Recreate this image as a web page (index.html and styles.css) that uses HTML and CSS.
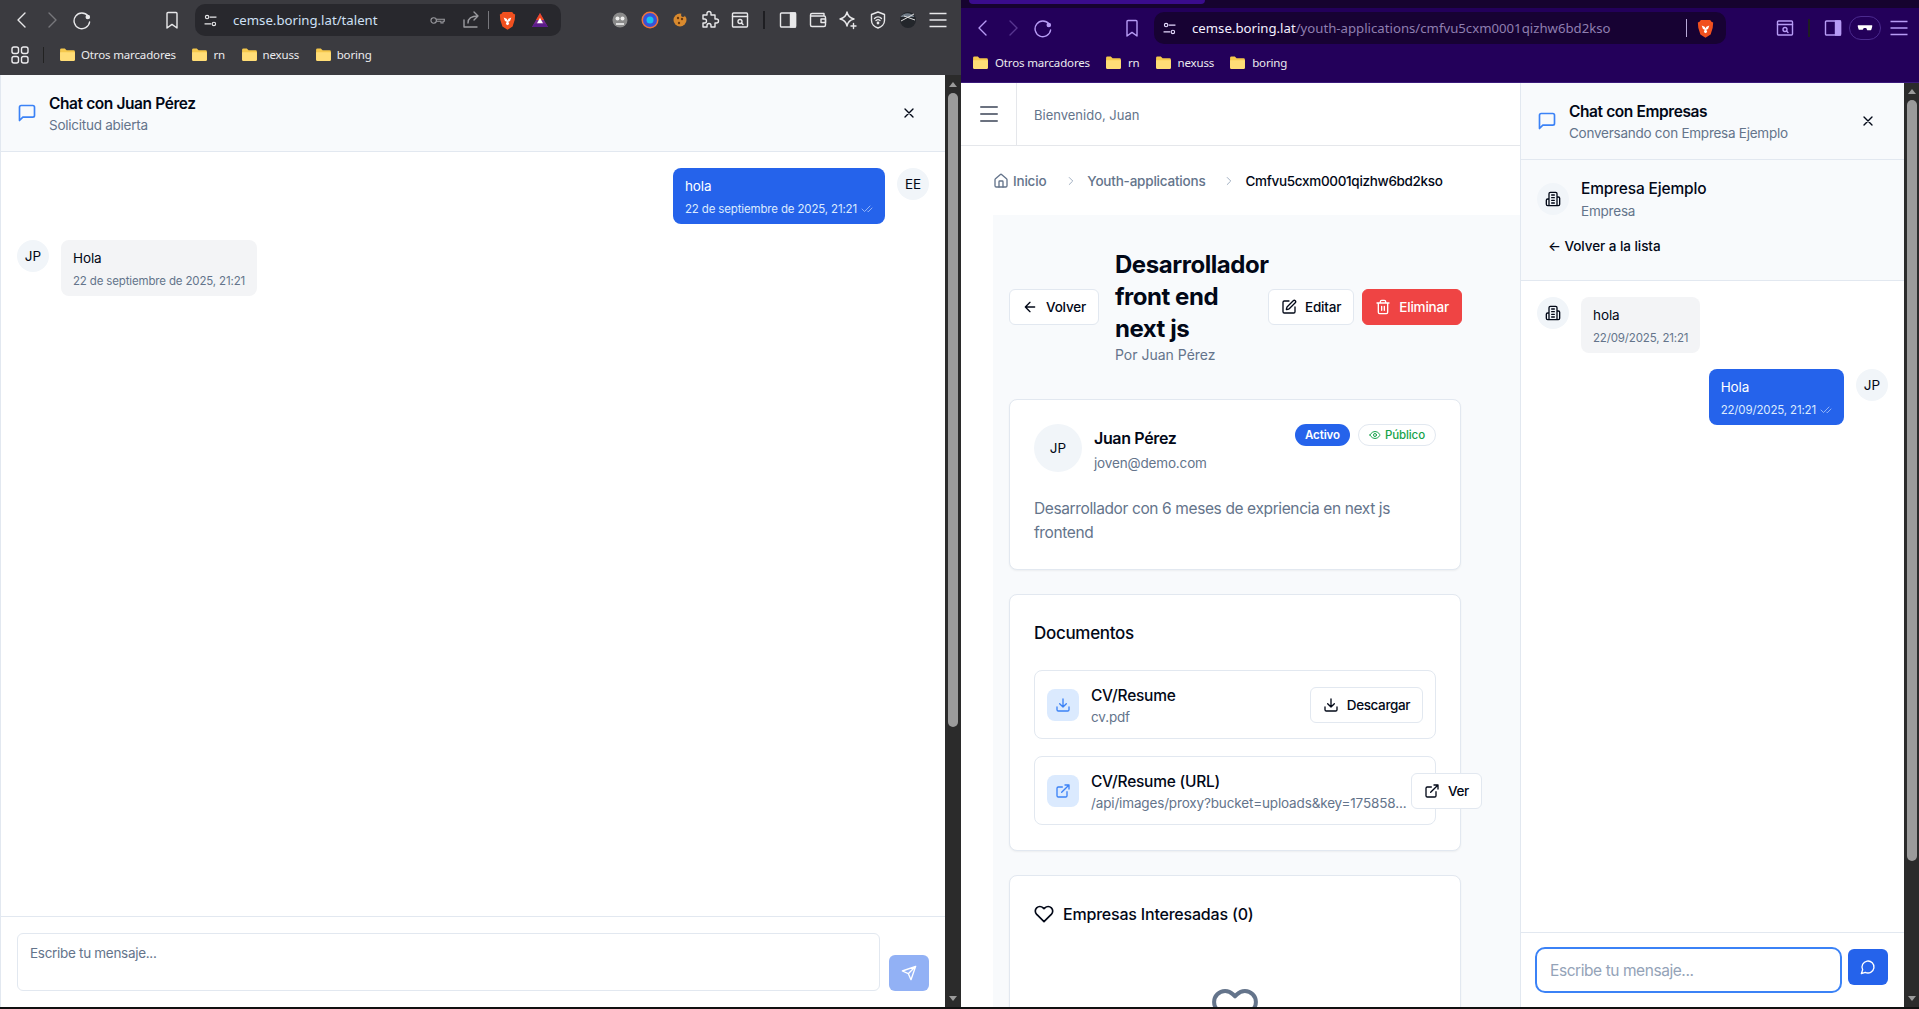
FILE: index.html
```html
<!DOCTYPE html>
<html lang="es">
<head>
<meta charset="utf-8">
<title>Chat</title>
<link rel="stylesheet" href="styles.css">
</head>
<body>
<svg class="sprite" xmlns="http://www.w3.org/2000/svg">
  <symbol id="i-msg" viewBox="0 0 24 24"><path d="M21 15a2 2 0 0 1-2 2H7l-4 4V5a2 2 0 0 1 2-2h14a2 2 0 0 1 2 2z"/></symbol>
  <symbol id="i-x" viewBox="0 0 24 24"><path d="M18 6 6 18M6 6l12 12"/></symbol>
  <symbol id="i-home" viewBox="0 0 24 24"><path d="M15 21v-8a1 1 0 0 0-1-1h-4a1 1 0 0 0-1 1v8"/><path d="M3 10a2 2 0 0 1 .709-1.528l7-5.999a2 2 0 0 1 2.582 0l7 5.999A2 2 0 0 1 21 10v9a2 2 0 0 1-2 2H5a2 2 0 0 1-2-2z"/></symbol>
  <symbol id="i-chev" viewBox="0 0 24 24"><path d="m9 18 6-6-6-6"/></symbol>
  <symbol id="i-back" viewBox="0 0 24 24"><path d="m12 19-7-7 7-7M19 12H5"/></symbol>
  <symbol id="i-pen" viewBox="0 0 24 24"><path d="M12 3H5a2 2 0 0 0-2 2v14a2 2 0 0 0 2 2h14a2 2 0 0 0 2-2v-7"/><path d="M18.375 2.625a1 1 0 0 1 3 3l-9.013 9.014a2 2 0 0 1-.853.505l-2.873.84a.5.5 0 0 1-.62-.62l.84-2.873a2 2 0 0 1 .506-.852z"/></symbol>
  <symbol id="i-trash" viewBox="0 0 24 24"><path d="M3 6h18M19 6v14c0 1-1 2-2 2H7c-1 0-2-1-2-2V6M8 6V4c0-1 1-2 2-2h4c1 0 2 1 2 2v2M10 11v6M14 11v6"/></symbol>
  <symbol id="i-eye" viewBox="0 0 24 24"><path d="M2 12s3-7 10-7 10 7 10 7-3 7-10 7-10-7-10-7Z"/><circle cx="12" cy="12" r="3"/></symbol>
  <symbol id="i-dl" viewBox="0 0 24 24"><path d="M21 15v4a2 2 0 0 1-2 2H5a2 2 0 0 1-2-2v-4M7 10l5 5 5-5M12 15V3"/></symbol>
  <symbol id="i-ext" viewBox="0 0 24 24"><path d="M15 3h6v6M10 14 21 3M18 13v6a2 2 0 0 1-2 2H5a2 2 0 0 1-2-2V8a2 2 0 0 1 2-2h6"/></symbol>
  <symbol id="i-heart" viewBox="0 0 24 24"><path d="M20.84 4.61a5.5 5.5 0 0 0-7.78 0L12 5.67l-1.06-1.06a5.5 5.5 0 0 0-7.78 7.78l1.06 1.06L12 21.23l7.78-7.78 1.06-1.06a5.5 5.5 0 0 0 0-7.78z"/></symbol>
  <symbol id="i-bld" viewBox="0 0 24 24"><path d="M6 22V4a2 2 0 0 1 2-2h8a2 2 0 0 1 2 2v18ZM6 12H4a2 2 0 0 0-2 2v6a2 2 0 0 0 2 2h2M18 9h2a2 2 0 0 1 2 2v9a2 2 0 0 1-2 2h-2M10 6h4M10 10h4M10 14h4M10 18h4"/></symbol>
  <symbol id="i-check" viewBox="0 0 24 24"><path d="M18 6 7 17l-5-5M22 10l-7.5 7.5L13 16"/></symbol>
  <symbol id="i-send" viewBox="0 0 24 24"><path d="m22 2-7 20-4-9-9-4ZM22 2 11 13"/></symbol>
  <symbol id="i-circ" viewBox="0 0 24 24"><path d="M7.9 20A9 9 0 1 0 4 16.1L2 22Z"/></symbol>
  <symbol id="i-menu" viewBox="0 0 24 24"><path d="M4 5h16M4 12h16M4 19h16"/></symbol>
  <symbol id="b-menu" viewBox="0 0 20 20"><path d="M1.5 3.5h17M1.500 10h17M1.500 16.500h17"/></symbol>
  <symbol id="b-back" viewBox="0 0 20 20"><path d="M13 3 6 10l7 7"/></symbol>
  <symbol id="b-fwd" viewBox="0 0 20 20"><path d="m7 3 7 7-7 7"/></symbol>
  <symbol id="b-reload" viewBox="0 0 20 20"><path d="M16 6A7.800 7.800 0 1 0 17.600 12"/><circle cx="15.800" cy="7" r="1.600" fill="currentColor"/></symbol>
  <symbol id="b-mark" viewBox="0 0 20 20"><path d="M5 3.500a1 1 0 0 1 1-1h8a1 1 0 0 1 1 1V18l-5-3.600L5 18Z"/></symbol>
  <symbol id="b-tune" viewBox="0 0 20 20"><circle cx="6" cy="6" r="2"/><circle cx="14" cy="14" r="2"/><path d="M9 6h8M3 14h8"/></symbol>
  <symbol id="b-key" viewBox="0 0 20 20"><circle cx="5.500" cy="10" r="3.200"/><path d="M8.700 8.500H18v2.400h-1.500V13h-2.400v-2.100H8.700"/></symbol>
  <symbol id="b-share" viewBox="0 0 20 20"><path d="M3 10v7h13M7 13c0-5 3-7 10-7M13 2l4 4-4 4"/></symbol>
  <symbol id="b-apps" viewBox="0 0 20 20"><rect x="2" y="2" width="6.500" height="6.500" rx="2"/><rect x="11.500" y="2" width="6.500" height="6.500" rx="2"/><rect x="2" y="11.500" width="6.500" height="6.500" rx="2"/><rect x="11.500" y="11.500" width="6.500" height="6.500" rx="2"/></symbol>
  <symbol id="b-puzzle" viewBox="0 0 20 20"><path d="M7 3.500a2 2 0 0 1 4 0V5h4v4h1.500a2 2 0 0 1 0 4H15v4h-4v-1.500a2 2 0 0 0-4 0V17H3v-4h1.500a2 2 0 0 0 0-4H3V5h4Z"/></symbol>
  <symbol id="b-search" viewBox="0 0 20 20"><rect x="2.500" y="3" width="15" height="14" rx="1"/><path d="M2.500 6.500h15"/><circle cx="10" cy="11.500" r="2"/><path d="m11.500 13 1.500 1.500"/></symbol>
  <symbol id="b-side" viewBox="0 0 20 20"><rect x="2.500" y="3" width="15" height="14" rx="1"/><path d="M12.500 3h5v14h-5Z" fill="currentColor"/></symbol>
  <symbol id="b-wallet" viewBox="0 0 20 20"><path d="M16 6V3.500H4A1.500 1.500 0 0 0 2.500 5v10A1.500 1.500 0 0 0 4 16.500h12a1.500 1.500 0 0 0 1.500-1.500V7.500A1.500 1.500 0 0 0 16 6H3"/><rect x="13" y="9" width="4.500" height="3.500"/></symbol>
  <symbol id="b-spark" viewBox="0 0 20 20"><path d="M9 2c.8 4 2.500 6 7 7-4.500 1-6.200 3-7 7-.8-4-2.500-6-7-7 4.500-1 6.200-3 7-7Z"/><path d="M15.500 13.500v5M13 16h5"/></symbol>
  <symbol id="b-shield" viewBox="0 0 20 20"><path d="M10 2 3.500 4.500v6C3.500 14 6.500 17 10 18c3.500-1 6.500-4 6.500-7.500v-6Z"/><path d="M6.500 8.500a5 5 0 0 1 7 0M8 10.500a3 3 0 0 1 4 0"/><circle cx="10" cy="13" r=".7"/></symbol>
  <symbol id="b-folder" viewBox="0 0 16 14"><path d="M0 2A1.500 1.500 0 0 1 1.500.5h3.600L7 2.500h7.500A1.500 1.500 0 0 1 16 4v8.500a1.500 1.500 0 0 1-1.500 1.500h-13A1.500 1.500 0 0 1 0 12.500Z" fill="#f5c84c"/><path d="M0 4.500h16v8a1.500 1.500 0 0 1-1.500 1.500h-13A1.500 1.500 0 0 1 0 12.500Z" fill="#ffdd77"/></symbol>
  <symbol id="b-lion" viewBox="0 0 20 22"><path d="M4.500 1h11l1.500 2 2 1-.5 6-2.500 8-6 4-6-4-2.500-8-.5-6 2-1Z" fill="#f1501f"/><path d="M5.500 7.500 9 9l1 2 1-2 3.500-1.500-1.500 4-2 1 1 2.500-2 1.500-2-1.500 1-2.500-2-1Z" fill="#fff"/></symbol>
  <symbol id="b-tri" viewBox="0 0 20 18"><path d="M10 1 1 17h18Z" fill="#7a2a94"/><path d="M10 1 5.500 9h9Z" fill="#f04a23"/><path d="M10 6.500 6.500 13h7Z" fill="#fff"/><path d="M1 17h18l-3-4H4Z" fill="#5a1d8a"/></symbol>
  <symbol id="b-glass" viewBox="0 0 20 10"><path d="M1 1.500h18v2l-1 3.500a1 1 0 0 1-1 .8h-3.500a1 1 0 0 1-1-.7L11.500 5h-3l-1 1.600a1 1 0 0 1-1 .7H3a1 1 0 0 1-1-.8L1 3.500Z" fill="currentColor"/></symbol>
</svg>

<div class="desktop">

  <section class="window win-dark">
    <div class="toolbar">
      <div class="nav-group">
        <svg class="bi"><use href="#b-back"/></svg>
        <svg class="bi dim"><use href="#b-fwd"/></svg>
        <svg class="bi"><use href="#b-reload"/></svg>
      </div>
      <svg class="bi mark"><use href="#b-mark"/></svg>
      <div class="urlbar">
        <svg class="bi-s"><use href="#b-tune"/></svg>
        <span class="url"><span class="host">cemse.boring.lat/talent</span></span>
        <svg class="bi-s key"><use href="#b-key"/></svg>
        <svg class="bi share"><use href="#b-share"/></svg>
        <i class="url-sep"></i>
        <svg class="logo lion"><use href="#b-lion"/></svg>
        <svg class="logo tri"><use href="#b-tri"/></svg>
      </div>
      <div class="tools">
        <svg class="ext" viewBox="0 0 20 20"><circle cx="10" cy="10" r="7.500" fill="#8a8a8a"/><circle cx="7.500" cy="8.500" r="2" fill="#eee"/><circle cx="12.500" cy="8.500" r="2" fill="#eee"/><path d="M6 13h8v2H6Z" fill="#ddd"/></svg>
        <svg class="ext" viewBox="0 0 20 20"><circle cx="10" cy="10" r="8.500" fill="#f0743a"/><circle cx="10" cy="10" r="7" fill="#3a52d8"/><circle cx="10" cy="10" r="3.500" fill="#17c3f0"/></svg>
        <svg class="ext" viewBox="0 0 20 20"><circle cx="10" cy="10" r="6.500" fill="#d98a2e"/><circle cx="8" cy="8" r="1.200" fill="#6b3a10"/><circle cx="12" cy="9" r="1.200" fill="#6b3a10"/><circle cx="9" cy="13" r="1.200" fill="#6b3a10"/><circle cx="13" cy="5" r="2" fill="#3b3b40"/></svg>
        <svg class="bi"><use href="#b-puzzle"/></svg>
        <svg class="bi"><use href="#b-search"/></svg>
        <i class="tool-sep"></i>
        <svg class="bi"><use href="#b-side"/></svg>
        <svg class="bi"><use href="#b-wallet"/></svg>
        <svg class="bi"><use href="#b-spark"/></svg>
        <svg class="bi"><use href="#b-shield"/></svg>
        <svg class="ext" viewBox="0 0 20 20"><circle cx="10" cy="10" r="8" fill="#23262b"/><path d="M2.500 7c3-5 11-5 14 0Z" fill="#6f7a86"/><path d="M3 11 16 4M6 6l11 4" stroke="#ddd" fill="none"/></svg>
        <svg class="bi menu-b"><use href="#b-menu"/></svg>
      </div>
    </div>
    <div class="bookmarks">
      <svg class="bi apps"><use href="#b-apps"/></svg>
      <i class="bm-sep"></i>
      <span class="bm"><svg class="folder"><use href="#b-folder"/></svg>Otros marcadores</span>
      <span class="bm"><svg class="folder"><use href="#b-folder"/></svg>rn</span>
      <span class="bm"><svg class="folder"><use href="#b-folder"/></svg>nexuss</span>
      <span class="bm"><svg class="folder"><use href="#b-folder"/></svg>boring</span>
    </div>
    <div class="viewport">
      <div class="chat full">
        <header class="chat-head">
          <svg class="ic head-ic"><use href="#i-msg"/></svg>
          <div class="head-text">
            <h2>Chat con Juan Pérez</h2>
            <p>Solicitud abierta</p>
          </div>
          <svg class="ic close"><use href="#i-x"/></svg>
        </header>
        <div class="msgs">
          <div class="msg mine">
            <div class="bubble blue">
              <p>hola</p>
              <div class="meta">22 de septiembre de 2025, 21:21 <svg class="ic tick"><use href="#i-check"/></svg></div>
            </div>
            <span class="avatar">EE</span>
          </div>
          <div class="msg">
            <span class="avatar">JP</span>
            <div class="bubble gray">
              <p>Hola</p>
              <div class="meta">22 de septiembre de 2025, 21:21</div>
            </div>
          </div>
        </div>
        <div class="composer">
          <div class="fake-area">Escribe tu mensaje...</div>
          <button class="send-btn off"><svg class="ic"><use href="#i-send"/></svg></button>
        </div>
      </div>
      <div class="scrollbar left-bar"><i class="arrow up"></i><i class="thumb"></i><i class="arrow down"></i></div>
    </div>
  </section>

  <section class="window win-purple">
    <div class="tabstrip"><i class="tab"></i></div>
    <div class="toolbar">
      <div class="nav-group">
        <svg class="bi"><use href="#b-back"/></svg>
        <svg class="bi dim"><use href="#b-fwd"/></svg>
        <svg class="bi"><use href="#b-reload"/></svg>
      </div>
      <svg class="bi mark"><use href="#b-mark"/></svg>
      <div class="urlbar">
        <svg class="bi-s tune-w"><use href="#b-tune"/></svg>
        <span class="url"><span class="host">cemse.boring.lat</span>/youth-applications/cmfvu5cxm0001qizhw6bd2kso</span>
        <i class="url-sep"></i>
        <svg class="logo lion"><use href="#b-lion"/></svg>
      </div>
      <div class="tools">
        <svg class="bi"><use href="#b-search"/></svg>
        <i class="tool-sep"></i>
        <svg class="bi"><use href="#b-side"/></svg>
        <span class="glass-pill"><svg class="glass"><use href="#b-glass"/></svg></span>
        <svg class="bi menu-b"><use href="#b-menu"/></svg>
      </div>
    </div>
    <div class="bookmarks">
      <span class="bm"><svg class="folder"><use href="#b-folder"/></svg>Otros marcadores</span>
      <span class="bm"><svg class="folder"><use href="#b-folder"/></svg>rn</span>
      <span class="bm"><svg class="folder"><use href="#b-folder"/></svg>nexuss</span>
      <span class="bm"><svg class="folder"><use href="#b-folder"/></svg>boring</span>
    </div>
    <div class="viewport">
      <main class="app">
        <div class="topbar">
          <div class="menu-cell"><svg class="ic"><use href="#i-menu"/></svg></div>
          <span class="welcome">Bienvenido, Juan</span>
        </div>
        <nav class="crumbs">
          <span class="crumb"><svg class="ic"><use href="#i-home"/></svg>Inicio</span>
          <svg class="ic sep"><use href="#i-chev"/></svg>
          <span class="crumb">Youth-applications</span>
          <svg class="ic sep second"><use href="#i-chev"/></svg>
          <span class="crumb now">Cmfvu5cxm0001qizhw6bd2kso</span>
        </nav>
        <div class="content">
          <div class="title-row">
            <button class="btn"><svg class="ic"><use href="#i-back"/></svg>Volver</button>
            <div class="title">
              <h1>Desarrollador front end next js</h1>
              <p>Por Juan Pérez</p>
            </div>
            <div class="actions">
              <button class="btn"><svg class="ic"><use href="#i-pen"/></svg>Editar</button>
              <button class="btn danger"><svg class="ic"><use href="#i-trash"/></svg>Eliminar</button>
            </div>
          </div>

          <article class="card">
            <div class="person">
              <span class="avatar big">JP</span>
              <div class="who">
                <h3>Juan Pérez</h3>
                <p>joven@demo.com</p>
              </div>
              <div class="badges">
                <span class="badge active">Activo</span>
                <span class="badge public"><svg class="ic"><use href="#i-eye"/></svg>Público</span>
              </div>
            </div>
            <p class="desc">Desarrollador con 6 meses de expriencia en next js frontend</p>
          </article>

          <article class="card card-docs">
            <h3 class="card-title">Documentos</h3>
            <div class="docs">
              <div class="doc">
                <span class="doc-ic"><svg class="ic"><use href="#i-dl"/></svg></span>
                <div class="doc-info">
                  <h4>CV/Resume</h4>
                  <p>cv.pdf</p>
                </div>
                <button class="btn doc-btn"><svg class="ic"><use href="#i-dl"/></svg>Descargar</button>
              </div>
              <div class="doc">
                <span class="doc-ic"><svg class="ic"><use href="#i-ext"/></svg></span>
                <div class="doc-info wide">
                  <h4>CV/Resume (URL)</h4>
                  <p>/api/images/proxy?bucket=uploads&amp;key=175858...</p>
                </div>
                <button class="btn doc-btn"><svg class="ic"><use href="#i-ext"/></svg>Ver</button>
              </div>
            </div>
          </article>

          <article class="card">
            <h3 class="card-title with-ic"><svg class="ic"><use href="#i-heart"/></svg>Empresas Interesadas (0)</h3>
            <div class="empty"><svg class="ic"><use href="#i-heart"/></svg></div>
          </article>
        </div>
      </main>

      <aside class="chat side">
        <header class="chat-head">
          <svg class="ic head-ic"><use href="#i-msg"/></svg>
          <div class="head-text">
            <h2>Chat con Empresas</h2>
            <p>Conversando con Empresa Ejemplo</p>
          </div>
          <svg class="ic close"><use href="#i-x"/></svg>
        </header>
        <div class="company">
          <div class="company-row">
            <span class="avatar"><svg class="ic"><use href="#i-bld"/></svg></span>
            <div class="company-text">
              <h3>Empresa Ejemplo</h3>
              <p>Empresa</p>
            </div>
          </div>
          <button class="link-back">← Volver a la lista</button>
        </div>
        <div class="msgs">
          <div class="msg">
            <span class="avatar"><svg class="ic"><use href="#i-bld"/></svg></span>
            <div class="bubble gray">
              <p>hola</p>
              <div class="meta">22/09/2025, 21:21</div>
            </div>
          </div>
          <div class="msg mine">
            <div class="bubble blue">
              <p>Hola</p>
              <div class="meta">22/09/2025, 21:21 <svg class="ic tick"><use href="#i-check"/></svg></div>
            </div>
            <span class="avatar">JP</span>
          </div>
        </div>
        <div class="composer">
          <div class="focus-input">Escribe tu mensaje...</div>
          <button class="send-btn"><svg class="ic"><use href="#i-circ"/></svg></button>
        </div>
      </aside>
      <div class="scrollbar right-bar"><i class="arrow up"></i><i class="thumb"></i><i class="arrow down"></i></div>
    </div>
  </section>
</div>
</body>
</html>
```

FILE: styles.css
```css
* { box-sizing: border-box; }
html, body { margin: 0; height: 100%; overflow: hidden; }
body { background: #111; font-family: Inter, "Noto Sans", sans-serif; color: #020817; }
h1, h2, h3, h4, p { margin: 0; }
button { font: inherit; color: inherit; cursor: pointer; }
.sprite { display: none; }

.desktop { display: grid; grid-template-columns: 961px 958px; height: 1007px; }
.window { display: flex; flex-direction: column; min-width: 0; height: 1007px; overflow: hidden; }

/* browser chrome */
.toolbar { display: flex; align-items: center; flex: none; color: #e8e8ea; }
.bi { width: 20px; height: 20px; fill: none; stroke: currentColor; stroke-width: 1.4; stroke-linecap: round; stroke-linejoin: round; flex: none; }
.bi-s { width: 17px; height: 17px; fill: none; stroke: currentColor; stroke-width: 1.3; flex: none; }
.menu-b { stroke-width: 1.7; stroke-linecap: butt; }
.dim { opacity: .35; }
.nav-group { display: flex; gap: 10px; padding-left: 12px; }
.mark { margin-left: 70px; }
.urlbar { display: flex; align-items: center; height: 32px; border-radius: 10px; flex: none; }
.url { font-family: "Noto Sans", sans-serif; font-size: 13.2px; white-space: nowrap; }
.logo { flex: none; }
.lion { width: 17px; height: 19px; }
.tri { width: 18px; height: 16px; margin-left: 15px; }
.url-sep { width: 1px; height: 18px; flex: none; }
.tools { display: flex; align-items: center; gap: 10px; }
.ext { width: 20px; height: 20px; flex: none; }
.tool-sep { width: 2px; height: 18px; background: #1e1e22; margin: 0 3px; flex: none; }

.bookmarks { display: flex; align-items: center; flex: none; font-family: "Noto Sans", sans-serif; font-size: 11.5px; letter-spacing: -.15px; color: #ecebee; gap: 16.5px; }
.bm { display: inline-flex; align-items: center; gap: 6px; white-space: nowrap; }
.folder { width: 15px; height: 13px; flex: none; }
.bm-sep { width: 1px; height: 16px; background: #222; flex: none; }

.win-dark .toolbar { height: 40px; background: #3b3b40; }
.win-dark .urlbar { width: 366px; margin-left: 13px; padding-left: 7px; background: #28282d; }
.win-dark .url { margin-left: 14px; width: 196px; color: #cfe0f5; }
.win-dark .key { color: #9a9a9f; }
.win-dark .share { color: #9a9a9f; margin-left: 15px; }
.win-dark .url-sep { background: #77777c; margin: 0 10px 0 7px; }
.win-dark .tools { margin-left: 49px; }
.win-dark .bookmarks { height: 35px; background: #3b3b40; padding-left: 10px; padding-bottom: 6px; }
.win-dark .apps { margin-right: -4px; }

.tabstrip { height: 8px; background: #16032f; flex: none; padding-left: 8px; }
.tab { display: block; width: 236px; height: 4px; background: #3a0c8c; border-radius: 0 0 4px 4px; }
.win-purple .toolbar { height: 40px; background: #23005a; color: #b79bf5; }
.win-purple .mark { margin-left: 69px; }
.win-purple .urlbar { width: 572px; margin-left: 12px; padding-left: 7px; background: #170233; }
.win-purple .tune-w { color: #e6dcff; }
.win-purple .url { margin-left: 14px; width: 483px; color: #8f7fb0; }
.win-purple .url .host { color: #f4f0ff; }
.win-purple .url-sep { background: #b8a9d8; margin: 0 10px 0 11px; }
.win-purple .tools { margin-left: 49px; }
.win-purple .bookmarks { height: 35px; background: #23005a; padding-left: 12px; gap: 16px; border-bottom: 1px solid #3a1a7a; padding-bottom: 6px; }
.win-purple .bm { gap: 7px; }
.glass-pill { display: flex; align-items: center; justify-content: center; width: 32px; height: 24px; border: 1px solid #4b2a8f; border-radius: 12px; margin: 0 -2px 0 -4px; color: #fff; flex: none; }
.glass { width: 16px; height: 8px; }

.viewport { flex: 1; display: flex; min-height: 0; background: #fff; }
.scrollbar { width: 15px; flex: none; background: #2b2b2b; display: flex; flex-direction: column; align-items: center; }
.left-bar { width: 16px; padding-top: 7px; }
.right-bar { padding-top: 6px; }
.arrow { width: 0; height: 0; border-left: 4px solid transparent; border-right: 4px solid transparent; flex: none; }
.arrow.up { border-bottom: 5px solid #9b9b9b; margin-bottom: 6px; }
.arrow.down { border-top: 5px solid #9b9b9b; margin-top: auto; margin-bottom: 6px; }
.thumb { width: 10px; background: #9b9b9b; border-radius: 5px; flex: none; }
.left-bar .thumb { height: 634px; }
.right-bar .thumb { height: 761px; }

/* lucide */
.ic { width: 16px; height: 16px; fill: none; stroke: currentColor; stroke-width: 2; stroke-linecap: round; stroke-linejoin: round; flex: none; }

/* chat */
.chat { display: flex; flex-direction: column; min-width: 0; background: #fff; }
.chat.full { flex: 1; border-left: 1px solid #e2e8f0; }
.chat.side { width: 384px; flex: none; border-left: 1px solid #e2e8f0; }
.chat-head { display: flex; align-items: center; height: 77px; padding: 0 16px; background: #f8fafc; border-bottom: 1px solid #e2e8f0; flex: none; }
.head-ic { width: 20px; height: 20px; color: #3b82f6; margin-right: 12px; }
.head-text { flex: 1; padding-top: 1px; }
.head-text h2 { font-size: 15.5px; line-height: 24px; font-weight: 600; letter-spacing: -.4px; }
.head-text p { font-size: 13.5px; line-height: 20px; letter-spacing: -.25px; color: #64748b; margin-top: -1px; }
.close { margin-right: 12px; }

.msgs { flex: 1; padding: 16px; display: flex; flex-direction: column; gap: 16px; min-height: 0; }
.msg { display: flex; gap: 12px; align-items: flex-start; }
.msg.mine { justify-content: flex-end; }
.avatar { width: 32px; height: 32px; border-radius: 50%; background: #f1f5f9; display: flex; align-items: center; justify-content: center; font-size: 13.5px; flex: none; }
.bubble { padding: 8px 12px 7px; border-radius: 8px; }
.bubble p { font-size: 13.5px; line-height: 20px; letter-spacing: -.1px; }
.meta { font-size: 11.5px; line-height: 16px; letter-spacing: -.15px; margin-top: 5px; display: flex; align-items: center; gap: 4px; white-space: nowrap; }
.blue { background: #2563eb; color: #fff; }
.blue .meta { color: #dbeafe; }
.gray { background: #f3f4f6; }
.gray .meta { color: #64748b; }
.tick { width: 12px; height: 12px; stroke-width: 1.5; opacity: .8; }

.composer { display: flex; align-items: flex-end; gap: 9px; padding: 16px; border-top: 1px solid #e2e8f0; flex: none; }
.fake-area { flex: 1; height: 58px; padding: 9px 12px; border: 1px solid #e2e8f0; border-radius: 6px; font-size: 13.5px; line-height: 20px; letter-spacing: -.3px; color: #64748b; }
.send-btn { width: 40px; height: 36px; border: 0; border-radius: 6px; background: #2563eb; color: #fff; display: flex; align-items: center; justify-content: center; flex: none; }
.send-btn.off { background: #92b1f5; }

.side .composer { align-items: flex-start; gap: 6px; padding: 14px 16px 14px 14px; }
.side .send-btn { margin-top: 2px; }
.focus-input { flex: 1; height: 46px; padding: 0 13px; display: flex; align-items: center; border: 2px solid #3b82f6; border-radius: 10px; font-size: 15.5px; letter-spacing: -.43px; color: #94a3b8; }

.company { padding: 16px; background: #f8fafc; border-bottom: 1px solid #e2e8f0; height: 121px; flex: none; }
.company-row { display: flex; gap: 12px; align-items: center; }
.company-text { padding-top: 1px; }
.company-row h3 { font-size: 15.5px; line-height: 24px; font-weight: 500; letter-spacing: -.15px; }
.company-row p { font-size: 13.5px; line-height: 20px; letter-spacing: -.2px; color: #64748b; }
.link-back { display: block; background: none; border: 0; padding: 0; margin: 15px 0 0 11px; font-size: 13.5px; line-height: 20px; letter-spacing: -.05px; font-weight: 500; }

/* app */
.app { flex: 1; min-width: 0; background: #fff; display: flex; flex-direction: column; overflow: hidden; }
.topbar { display: flex; align-items: center; height: 63px; border-bottom: 1px solid #e5e7eb; flex: none; }
.menu-cell { width: 56px; height: 100%; display: flex; align-items: center; justify-content: center; border-right: 1px solid #e5e7eb; color: #6b7280; }
.menu-cell .ic { width: 24px; height: 24px; }
.welcome { margin-left: 17px; padding-top: 2px; font-size: 13px; color: #64748b; }
.crumbs { display: flex; align-items: center; height: 69px; padding-left: 32px; font-size: 13.5px; letter-spacing: -.2px; flex: none; color: #64748b; font-weight: 500; }
.crumb { display: inline-flex; align-items: center; gap: 4px; }
.now { color: #020817; letter-spacing: -.32px; }
.sep { width: 14px; height: 14px; margin: 0 9px 0 18px; stroke-width: 1.5; color: #94a3b8; }
.second { margin: 0 10px 0 16px; }
.content { flex: 1; margin-left: 32px; background: #f8fafc; padding: 34px 16px 0; min-height: 0; }

.title-row { display: flex; align-items: center; width: 453px; margin-bottom: 34px; }
.title-row > .btn { margin-right: 16px; }
.title { width: 152px; flex: none; }
.title h1 { font-size: 24px; line-height: 32px; font-weight: 700; letter-spacing: -.45px; }
.title p { font-size: 14px; line-height: 20px; color: #64748b; }
.actions { display: flex; gap: 8px; margin-left: auto; }
.btn { display: inline-flex; align-items: center; gap: 8px; height: 36px; padding: 0 12px; background: #fff; border: 1px solid #e2e8f0; border-radius: 6px; font-size: 13.5px; letter-spacing: -.2px; font-weight: 500; white-space: nowrap; flex: none; }
.danger { background: #ef4444; border-color: #ef4444; color: #fff; }
.doc-btn { letter-spacing: -.4px; }

.card { width: 452px; background: #fff; border: 1px solid #e2e8f0; border-radius: 8px; box-shadow: 0 1px 2px rgba(0,0,0,.05); padding: 24px; margin-bottom: 24px; }
.card-docs { padding-bottom: 25px; }
.person { display: flex; gap: 12px; align-items: flex-start; }
.avatar.big { width: 48px; height: 48px; }
.who { flex: 1; padding-top: 2px; }
.who h3 { font-size: 16px; line-height: 24px; font-weight: 600; letter-spacing: -.35px; }
.who p { font-size: 13.5px; line-height: 20px; letter-spacing: -.15px; color: #64748b; margin-top: 3px; }
.badges { display: flex; gap: 8px; }
.badge { display: inline-flex; align-items: center; gap: 4px; height: 22px; padding: 0 10px; border-radius: 11px; font-size: 11.5px; letter-spacing: -.1px; font-weight: 600; }
.active { background: #2563eb; color: #fff; }
.public { background: #fff; border: 1px solid #e2e8f0; color: #16a34a; font-weight: 500; }
.public .ic { width: 12px; height: 12px; }
.desc { margin-top: 24px; font-size: 15.5px; line-height: 24px; letter-spacing: -.38px; color: #64748b; }

.card-title { font-size: 17px; line-height: 28px; font-weight: 500; letter-spacing: -.3px; }
.with-ic { display: flex; align-items: center; gap: 9px; font-size: 16px; letter-spacing: -.2px; }
.with-ic .ic { width: 20px; height: 20px; }
.docs { margin-top: 23px; display: flex; flex-direction: column; gap: 17px; }
.doc { display: flex; align-items: center; gap: 12px; height: 69px; padding: 0 12px; border: 1px solid #e2e8f0; border-radius: 8px; }
.doc-ic { width: 32px; height: 32px; border-radius: 8px; background: #dbeafe; color: #3b82f6; display: flex; align-items: center; justify-content: center; flex: none; }
.doc-info { flex: 1; min-width: 0; padding-top: 3px; }
.doc-info.wide { flex: none; width: 317px; margin-right: -9px; }
.doc-info h4 { font-size: 15.5px; line-height: 20px; font-weight: 500; letter-spacing: -.25px; }
.doc-info p { font-size: 13.5px; line-height: 20px; letter-spacing: -.15px; color: #64748b; white-space: nowrap; margin-top: 1px; }
.empty { display: flex; justify-content: center; margin-top: 57px; color: #64748b; }
.empty .ic { width: 48px; height: 48px; }
```
